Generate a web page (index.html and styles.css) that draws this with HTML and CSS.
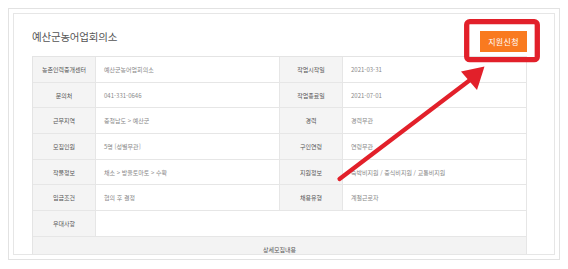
FILE: index.html
```html
<!DOCTYPE html>
<html lang="ko">
<head>
<meta charset="utf-8">
<title>예산군농어업회의소</title>
<link rel="stylesheet" href="styles.css">
</head>
<body>
<div class="frame">
  <div class="card">
    <div class="panel">
      <div class="head">
        <h1 class="title">예산군농어업회의소</h1>
        <a class="apply">지원신청</a>
      </div>
      <div class="info">
        <div class="lbl">농촌인력중개센터</div><div class="val">예산군농어업회의소</div><div class="lbl">작업시작일</div><div class="val">2021-03-31</div>
        <div class="lbl">문의처</div><div class="val">041-331-0646</div><div class="lbl">작업종료일</div><div class="val">2021-07-01</div>
        <div class="lbl">근무지역</div><div class="val">충청남도 &gt; 예산군</div><div class="lbl">경력</div><div class="val">경력무관</div>
        <div class="lbl">모집인원</div><div class="val">5명 [성별무관]</div><div class="lbl">구인연령</div><div class="val">연령무관</div>
        <div class="lbl">작물정보</div><div class="val">채소 &gt; 방울토마토 &gt; 수확</div><div class="lbl">지원정보</div><div class="val">숙박비지원 / 중식비지원 / 교통비지원</div>
        <div class="lbl">임금조건</div><div class="val">협의 후 결정</div><div class="lbl">채용유형</div><div class="val">계절근로자</div>
        <div class="lbl">우대사항</div><div class="val span3"></div>
        <div class="detail">상세모집내용</div>
      </div>
    </div>
  </div>
</div>
<svg class="annot" width="568" height="269" viewBox="0 0 568 269" aria-hidden="true">
  <rect x="466.7" y="21.7" width="70.6" height="38" rx="3" fill="none" stroke="#e2202a" stroke-width="5.3"/>
  <line x1="339.5" y1="179" x2="470" y2="80" stroke="#e2202a" stroke-width="4.2" stroke-linecap="round"/>
  <polygon points="484.5,66.5 461,71.5 477,90" fill="#e2202a"/>
</svg>
</body>
</html>
```
FILE: styles.css
```css
* { box-sizing: border-box; margin: 0; padding: 0; }
html, body { background: #fff; }
body {
  width: 568px;
  height: 269px;
  overflow: hidden;
  position: relative;
  font-family: "Noto Sans CJK KR", "Noto Sans", sans-serif;
}
.frame {
  position: relative;
  margin: 8px 0 0 8px;
  width: 552px;
  height: 252px;
}
.frame::before {
  content: "";
  position: absolute;
  left: 2px;
  top: 2px;
  width: 50px;
  height: 30px;
  box-shadow: -4px -2px 5px rgba(0, 0, 0, 0.35);
  z-index: -1;
}
.frame::after {
  content: "";
  position: absolute;
  right: 2px;
  bottom: 2px;
  width: 120px;
  height: 60px;
  box-shadow: 4px 4px 5px rgba(0, 0, 0, 0.3);
  z-index: -1;
}
.card {
  background: #fff;
  border: 1px solid #e2e2e2;
  padding: 4px;
  height: 100%;
}
.panel {
  border: 1px solid #e6e6e6;
  height: 100%;
  padding: 0 27px 0 18px;
  overflow: hidden;
  background: #fff;
}
.head {
  height: 42px;
  display: flex;
  justify-content: space-between;
  align-items: flex-start;
}
.title {
  margin-top: 16px;
  font-size: 10.5px;
  line-height: 14px;
  font-weight: 400;
  color: #555;
  letter-spacing: -0.2px;
}
.apply {
  margin-top: 17px;
  width: 47px;
  height: 21px;
  background: #f97a1f;
  color: #fff;
  font-size: 8px;
  letter-spacing: 0.3px;
  display: flex;
  align-items: center;
  justify-content: center;
}
.info {
  display: grid;
  grid-template-columns: 63px 184px 63px 184px;
  grid-auto-rows: 25.7px;
  border-top: 1px solid #e4e4e4;
  border-left: 1px solid #e4e4e4;
}
.lbl, .val, .detail {
  border-right: 1px solid #e6e6e6;
  border-bottom: 1px solid #e6e6e6;
  font-size: 6px;
  display: flex;
  align-items: center;
}
.lbl {
  background: #f4f4f4;
  color: #555;
  justify-content: center;
}
.val {
  color: #888;
  padding-left: 8px;
}
.span3 { grid-column: span 3; }
.detail {
  grid-column: 1 / -1;
  background: #f3f3f3;
  color: #555;
  justify-content: center;
}
.annot {
  position: absolute;
  left: 0;
  top: 0;
  pointer-events: none;
}
```
